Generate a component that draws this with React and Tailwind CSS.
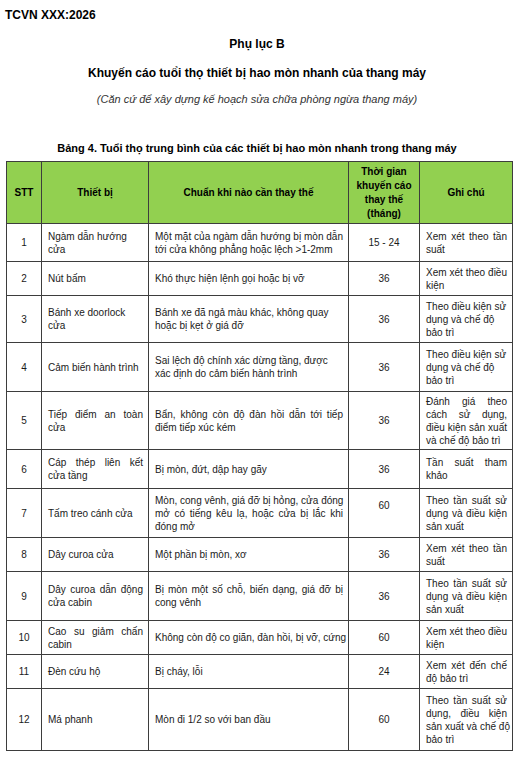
const rows = [
  { h: "h-[38px]", stt: "1", tb: ["Ngàm dẫn hướng", "cửa"], tbJ: false, cc: ["Một mặt của ngàm dẫn hướng bị mòn dẫn", "tới cửa không phẳng hoặc lệch >1-2mm"], ccJ: true, tg: "15 - 24", gc: ["Xem xét theo tần", "suất"], gcJ: true },
  { h: "h-[34px]", stt: "2", tb: ["Nút bấm"], cc: ["Khó thực hiện lệnh gọi hoặc bị vỡ"], tg: "36", gc: ["Xem xét theo điều", "kiện"], gcJ: true },
  { h: "h-[47px]", stt: "3", tb: ["Bánh xe doorlock", "cửa"], cc: ["Bánh xe đã ngả màu khác, không quay", "hoặc bị kẹt ở giá đỡ"], tg: "36", gc: ["Theo điều kiện sử", "dụng và chế độ", "bảo trì"] },
  { h: "h-[49px]", stt: "4", tb: ["Cảm biến hành trình"], cc: ["Sai lệch độ chính xác dừng tầng, được", "xác định do cảm biến hành trình"], tg: "36", gc: ["Theo điều kiện sử", "dụng và chế độ", "bảo trì"] },
  { h: "h-[58px]", stt: "5", tb: ["Tiếp điểm an toàn", "cửa"], tbJ: true, cc: ["Bẩn, không còn độ đàn hồi dẫn tới tiếp", "điểm tiếp xúc kém"], ccJ: true, tg: "36", gc: ["Đánh giá theo", "cách sử dụng,", "điều kiện sản xuất", "và chế độ bảo trì"], gcJ: true },
  { h: "h-[39px]", stt: "6", tb: ["Cáp thép liên kết", "cửa tầng"], tbJ: true, cc: ["Bị mòn, đứt, dập hay gãy"], tg: "36", gc: ["Tần suất tham", "khảo"], gcJ: true },
  { h: "h-[49px]", stt: "7", tb: ["Tấm treo cánh cửa"], cc: ["Mòn, cong vênh, giá đỡ bị hỏng, cửa đóng", "mở có tiếng kêu lạ, hoặc cửa bị lắc khi", "đóng mở"], ccJ: true, tg: "60", tgTop: true, gc: ["Theo tần suất sử", "dụng và điều kiện", "sản xuất"], gcJ: true },
  { h: "h-[34px]", stt: "8", tb: ["Dây curoa cửa"], cc: ["Một phần bị mòn, xơ"], tg: "36", gc: ["Xem xét theo tần", "suất"], gcJ: true },
  { h: "h-[49px]", stt: "9", tb: ["Dây curoa dẫn động", "cửa cabin"], tbJ: true, cc: ["Bị mòn một số chỗ, biến dạng, giá đỡ bị", "cong vênh"], ccJ: true, tg: "36", gc: ["Theo tần suất sử", "dụng và điều kiện", "sản xuất"], gcJ: true },
  { h: "h-[34px]", stt: "10", tb: ["Cao su giảm chấn", "cabin"], tbJ: true, cc: ["Không còn độ co giãn, đàn hồi, bị vỡ, cứng"], tg: "60", gc: ["Xem xét theo điều", "kiện"], gcJ: true },
  { h: "h-[34px]", stt: "11", tb: ["Đèn cứu hộ"], cc: ["Bị cháy, lỗi"], tg: "24", gc: ["Xem xét đến chế", "độ bảo trì"], gcJ: true },
  { h: "h-[62px]", stt: "12", tb: ["Má phanh"], cc: ["Mòn đi 1/2 so với ban đầu"], tg: "60", gc: ["Theo tần suất sử", "dụng, điều kiện", "sản xuất và chế độ", "bảo trì"], gcJ: true },
];

function Lines({ lines, justify }) {
  return lines.map((l, i) => (
    <div
      key={i}
      className={
        justify && i < lines.length - 1
          ? "whitespace-nowrap text-justify [text-align-last:justify]"
          : "whitespace-nowrap text-left"
      }
    >
      {l}
    </div>
  ));
}

const cell = "border border-[#3d3d3d] align-middle";

export default function App() {
  return (
    <div
      className="w-[514px] bg-white pt-[7px] text-[#1a1a1a]"
      style={{ fontFamily: '"Liberation Sans", Arial, sans-serif' }}
    >
      <div className="pl-[5px] text-[12px] font-bold leading-[16px] text-black">TCVN XXX:2026</div>
      <div className="mt-[13px] text-center text-[12px] font-bold leading-[16px] text-black">Phụ lục B</div>
      <div className="mt-[13px] text-center text-[12px] font-bold leading-[16px] text-black">
        Khuyến cáo tuổi thọ thiết bị hao mòn nhanh của thang máy
      </div>
      <div className="mt-[11px] text-center text-[11px] italic leading-[14px] text-[#333]">
        (Căn cứ để xây dựng kế hoạch sửa chữa phòng ngừa thang máy)
      </div>
      <div className="mt-[35px] text-center text-[11px] font-bold leading-[14px] text-black">
        Bảng 4. Tuổi thọ trung bình của các thiết bị hao mòn nhanh trong thang máy
      </div>

      <table className="ml-[6px] mt-[6px] w-[506px] table-fixed border-collapse border border-[#3d3d3d] text-[10px] leading-[13px]">
        <colgroup>
          <col className="w-[35px]" />
          <col className="w-[107px]" />
          <col className="w-[200px]" />
          <col className="w-[71px]" />
          <col className="w-[93px]" />
        </colgroup>
        <thead>
          <tr className="h-[62px] bg-[#92d050] font-bold text-black">
            <th className={cell + " text-center"}>STT</th>
            <th className={cell + " text-center"}>Thiết bị</th>
            <th className={cell + " text-center"}>Chuẩn khi nào cần thay thế</th>
            <th className={cell + " text-center leading-[14px]"}>
              Thời gian
              <br />
              khuyến cáo
              <br />
              thay thế
              <br />
              (tháng)
            </th>
            <th className={cell + " text-center"}>Ghi chú</th>
          </tr>
        </thead>
        <tbody>
          {rows.map((r) => (
            <tr key={r.stt} className={r.h}>
              <td className={cell + " text-center"}>{r.stt}</td>
              <td className={cell + " pl-[6px] pr-[5px]"}>
                <Lines lines={r.tb} justify={r.tbJ} />
              </td>
              <td className={cell + " pl-[6px] pr-[5px]"}>
                <Lines lines={r.cc} justify={r.ccJ} />
              </td>
              <td className={cell + " text-center" + (r.tgTop ? " !align-top pt-[10px]" : "")}>{r.tg}</td>
              <td className={cell + " pl-[6px] pr-[5px]"}>
                <Lines lines={r.gc} justify={r.gcJ} />
              </td>
            </tr>
          ))}
        </tbody>
      </table>
      <div className="h-[15px]" />
    </div>
  );
}
